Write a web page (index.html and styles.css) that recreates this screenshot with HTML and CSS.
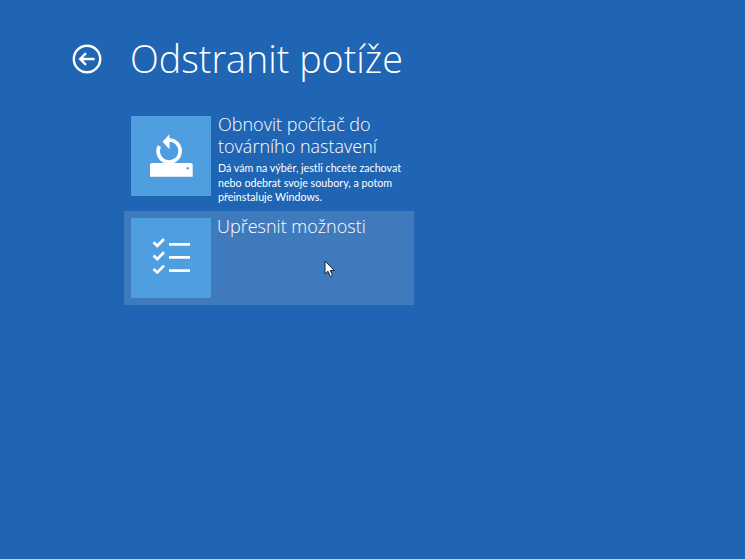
FILE: index.html
```html
<!DOCTYPE html>
<html lang="cs">
<head>
  <meta charset="UTF-8">
  <meta name="viewport" content="width=device-width, initial-scale=1.0">
  <title>Odstranit potíže</title>
  <link rel="stylesheet" href="styles.css">
</head>
<body>
  <div class="container">
    <div class="header">
      <svg class="back" width="30" height="30" viewBox="0 0 30 30" fill="none" stroke="#fff">
        <circle cx="15" cy="15" r="13.2" stroke-width="2.4"/>
        <path d="M22.5 15H8.5M14 9.2L8.2 15L14 20.8" stroke-width="2.4"/>
      </svg>
      <h1>Odstranit potíže</h1>
    </div>

    <div class="options">
      <div class="option">
        <div class="tile">
          <svg width="80" height="80" viewBox="0 0 80 80" fill="#fff">
            <path d="M19 49C19 47.800 19.800 47 21 47H59.700C60.900 47 61.700 47.800 61.700 49V60.700H19Z"/>
            <circle cx="56.700" cy="52.300" r="1.200" fill="#4f9fe0"/>
            <path d="M38 24A11 11 0 1 1 28.300 30" fill="none" stroke="#fff" stroke-width="3.600"/>
            <path d="M38.500 18.300L31.500 25.800L38.500 33.300Z"/>
          </svg>
        </div>
        <div class="text">
          <h2>Obnovit počítač do továrního nastavení</h2>
          <p>Dá vám na výběr, jestli chcete zachovat nebo odebrat svoje soubory, a potom přeinstaluje Windows.</p>
        </div>
      </div>

      <div class="option selected">
        <div class="tile">
          <svg width="80" height="80" viewBox="0 0 80 80" fill="none" stroke="#fff" stroke-width="2.700">
            <path d="M22.500 24.300L26.300 27.800L33 21M22.500 37.600L26.300 41.100L33 34.300M22.500 50.900L26.300 54.400L33 47.600"/>
            <path d="M38 26.300H59M38 39.300H59M38 52.700H59"/>
          </svg>
        </div>
        <div class="text">
          <h2>Upřesnit možnosti</h2>
        </div>
        <svg class="cursor" width="12" height="18" viewBox="0 0 12 18">
          <path d="M1 1V14L4 11.200L6.300 16.500L8.600 15.500L6.300 10.500H10.300Z" fill="#fff" stroke="#10243c" stroke-width="1"/>
        </svg>
      </div>
    </div>
  </div>
</body>
</html>
```

FILE: styles.css
```css
html, body {
  height: 100%;
}

body {
  margin: 0;
  background-color: #1f65b4;
  color: #fff;
  font-family: "Open Sans", "Liberation Sans", sans-serif;
  overflow: hidden;
}

.container {
  padding: 37px 0 0 72px;
}

.header {
  display: flex;
  align-items: center;
  gap: 28px;
  height: 44px;
}

h1 {
  margin: 0;
  font-size: 37.7px;
  font-weight: 300;
  line-height: 44px;
}

.options {
  display: flex;
  flex-direction: column;
  gap: 8px;
  margin: 28px 0 0 52px;
}

.option {
  position: relative;
  display: flex;
  gap: 7px;
  width: 276px;
  height: 80px;
  padding: 7px;
}

.selected {
  background-color: #3f7abd;
}

.tile {
  flex: none;
  width: 80px;
  height: 80px;
  background-color: #4f9fe0;
}

.text {
  margin-top: -3px;
}

.selected .text {
  margin-left: -1px;
}

h2 {
  margin: 0;
  font-size: 18px;
  font-weight: 300;
  line-height: 22px;
}

p {
  margin: 4px 0 0;
  font-family: Lato, "Liberation Sans", sans-serif;
  font-size: 10.7px;
  line-height: 14.5px;
}

.cursor {
  position: absolute;
  left: 200px;
  top: 49px;
}
```
